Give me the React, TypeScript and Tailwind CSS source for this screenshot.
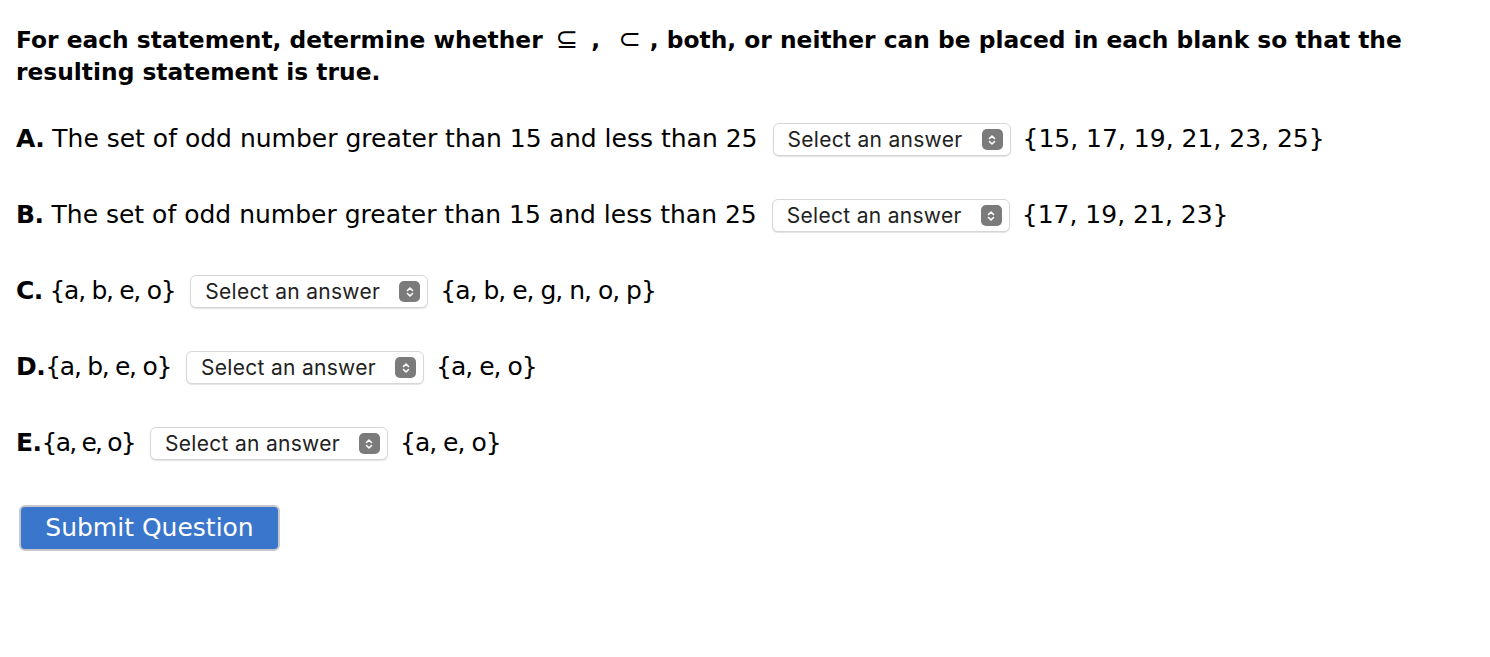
import React from "react";

function SelectBox({ width }: { width: string }) {
  return (
    <div
      className={`inline-flex items-center justify-between h-[33px] ${width} rounded-[6px] border border-[#d6d6d6] bg-white shadow-[0_1px_1px_rgba(0,0,0,0.12)] pl-[14px] pr-[7px]`}
    >
      <span className="text-[21px] tracking-[0.3px] text-[#222] font-['Inter',sans-serif] leading-none">
        Select an answer
      </span>
      <span className="flex h-[21px] w-[21px] items-center justify-center rounded-[5px] bg-[#7b7b7b]">
        <svg width="10" height="14" viewBox="0 0 10 14" fill="none">
          <path d="M2.5 5.5 L5 3 L7.5 5.5" stroke="white" strokeWidth="1.6" strokeLinecap="round" strokeLinejoin="round" />
          <path d="M2.5 8.5 L5 11 L7.5 8.5" stroke="white" strokeWidth="1.6" strokeLinecap="round" strokeLinejoin="round" />
        </svg>
      </span>
    </div>
  );
}

function Row({
  label,
  before,
  after,
  beforeCls = "",
  afterCls = "",
}: {
  label: string;
  before: string;
  after: string;
  beforeCls?: string;
  afterCls?: string;
}) {
  return (
    <div className="flex items-center h-[40px] text-[25px] text-black">
      <span className="font-bold tracking-[-0.5px]">{label}</span>
      <span className={`whitespace-pre ${beforeCls}`}>{before}</span>
      <span className="ml-[15px] mr-[12px]">
        <SelectBox width="w-[238px]" />
      </span>
      <span className={`whitespace-pre ${afterCls}`}>{after}</span>
    </div>
  );
}

export default function App() {
  return (
    <div className="min-h-[657px] w-[1490px] bg-white font-['DejaVu_Sans',sans-serif] text-black pl-[16px] pt-[24px]">
      <p className="text-[23.35px] font-bold leading-[32px] w-[1440px]">
        For each statement, determine whether
        <span className="font-normal text-[27px] leading-none ml-[13px] mr-[13px]">⊆</span>,
        <span className="font-normal text-[27px] leading-none ml-[18px] mr-[9px]">⊂</span>, both, or neither can be placed in each blank so that the
        <br />
        resulting statement is true.
      </p>
      <div className="mt-[31px] flex flex-col gap-[36px]">
        <Row label="A." before=" The set of odd number greater than 15 and less than 25" after="{15, 17, 19, 21, 23, 25}" />
        <Row label="B." before=" The set of odd number greater than 15 and less than 25" after="{17, 19, 21, 23}" />
        <Row label="C." before=" {a, b, e, o}" after="{a, b, e, g, n, o, p}" beforeCls="tracking-[-1.3px]" afterCls="tracking-[-1px]" />
        <Row label="D." before="{a, b, e, o}" after="{a, e, o}" beforeCls="tracking-[-1.3px]" afterCls="tracking-[-1px]" />
        <Row label="E." before="{a, e, o}" after="{a, e, o}" beforeCls="tracking-[-1.8px]" afterCls="tracking-[-1px]" />
      </div>
      <button className="mt-[42px] ml-[3px] h-[46px] w-[261px] rounded-[6px] border-2 border-[#c8c8c8] bg-[#3a76cb] text-white text-[25px] font-['DejaVu_Sans',sans-serif]">
        Submit Question
      </button>
    </div>
  );
}
